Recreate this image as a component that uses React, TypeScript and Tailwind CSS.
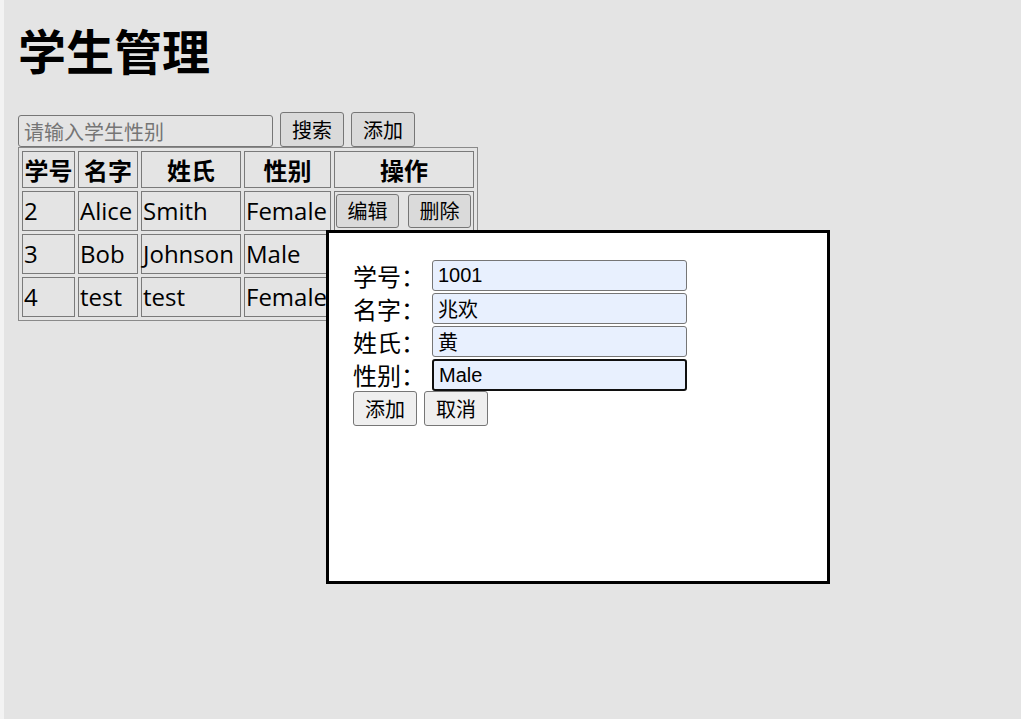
import React, { useState } from "react"

type Student = { id: string; name: string; surname: string; gender: string }

const students: Student[] = [
    { id: "2", name: "Alice", surname: "Smith", gender: "Female" },
    { id: "3", name: "Bob", surname: "Johnson", gender: "Male" },
    { id: "4", name: "test", surname: "test", gender: "Female" },
]

const font = { fontFamily: '"Open Sans", "Noto Sans CJK SC", sans-serif' }
const cjk = { fontFamily: '"Noto Sans CJK SC", sans-serif' }

const Btn = ({ label, light, small }: { label: string; light?: boolean; small?: boolean }) => (
    <button
        className={`shrink-0 rounded-[3px] border border-[#767676] text-[20px] leading-none text-black ${small ? "h-[34px] w-[63px]" : "h-[35px] w-[64px]"} ${light ? "bg-[#efefef]" : "bg-[#dadada]"}`}
        style={cjk}
    >
        {label}
    </button>
)

const App = () => {
    const [form] = useState({ id: "1001", name: "兆欢", surname: "黄", gender: "Male" })

    return (
        <div className="min-h-screen w-full bg-[#f3f3f3]" style={font}>
            <div className="ml-[4px] min-h-screen bg-[#e4e4e4] pl-[14px] pt-[25px] text-black">
                <h1 className="text-[48px] font-bold leading-[48px]" style={cjk}>
                    学生管理
                </h1>

                <div className="mt-[39px] flex items-end gap-[7px]">
                    <input
                        placeholder="请输入学生性别"
                        className="h-[32px] w-[255px] rounded-[3px] border border-[#767676] bg-transparent px-[5px] text-[20px] placeholder:text-[#757575]"
                        style={cjk}
                    />
                    <Btn label="搜索" />
                    <Btn label="添加" />
                </div>

                <table className="border-separate border-spacing-x-[3px] border-spacing-y-[3px] border border-[#8a8a8a] text-[24px]">
                    <thead>
                        <tr className="h-[37px]">
                            {[
                                ["学号", "w-[53px]"],
                                ["名字", "w-[60px]"],
                                ["姓氏", "w-[100px]"],
                                ["性别", "w-[87px]"],
                                ["操作", "w-[140px]"],
                            ].map(([t, w]) => (
                                <th key={t} className={`${w} border border-[#7a7a7a] p-0 text-center font-bold leading-[33px]`} style={cjk}>
                                    {t}
                                </th>
                            ))}
                        </tr>
                    </thead>
                    <tbody>
                        {students.map((s) => (
                            <tr key={s.id} className="h-[40px]">
                                <td className="border border-[#7a7a7a] px-[1px] leading-[36px]">{s.id}</td>
                                <td className="border border-[#7a7a7a] px-[1px] leading-[36px]">{s.name}</td>
                                <td className="border border-[#7a7a7a] px-[1px] leading-[36px]">{s.surname}</td>
                                <td className="whitespace-nowrap border border-[#7a7a7a] px-[1px] leading-[36px]">{s.gender}</td>
                                <td className="border border-[#7a7a7a] px-[1px] py-0">
                                    <div className="flex gap-[9px]">
                                        <Btn label="编辑" small />
                                        <Btn label="删除" small />
                                    </div>
                                </td>
                            </tr>
                        ))}
                    </tbody>
                </table>
            </div>

            <div className="absolute left-[326px] top-[230px] box-border h-[354px] w-[504px] border-[3px] border-black bg-white pl-[24px] pt-[27px]">
                {[
                    ["学号：", form.id],
                    ["名字：", form.name],
                    ["姓氏：", form.surname],
                    ["性别：", form.gender],
                ].map(([label, value], i) => (
                    <div key={label} className="flex h-[33px] items-start">
                        <span className="w-[79px] text-[24px] leading-[31px]" style={cjk}>
                            {label}
                        </span>
                        <input
                            defaultValue={value}
                            className={`w-[255px] rounded-[3px] bg-[#e8f0fe] px-[5px] text-[20px] text-black ${i === 3 ? "h-[32px] border-2 border-[#101010]" : "h-[31px] border border-[#767676]"}`}
                            style={{ fontFamily: '"Liberation Sans", "Noto Sans CJK SC", sans-serif' }}
                        />
                    </div>
                ))}
                <div className="-mt-[1px] flex gap-[7px]">
                    <Btn label="添加" light />
                    <Btn label="取消" light />
                </div>
            </div>
        </div>
    )
}

export default App
